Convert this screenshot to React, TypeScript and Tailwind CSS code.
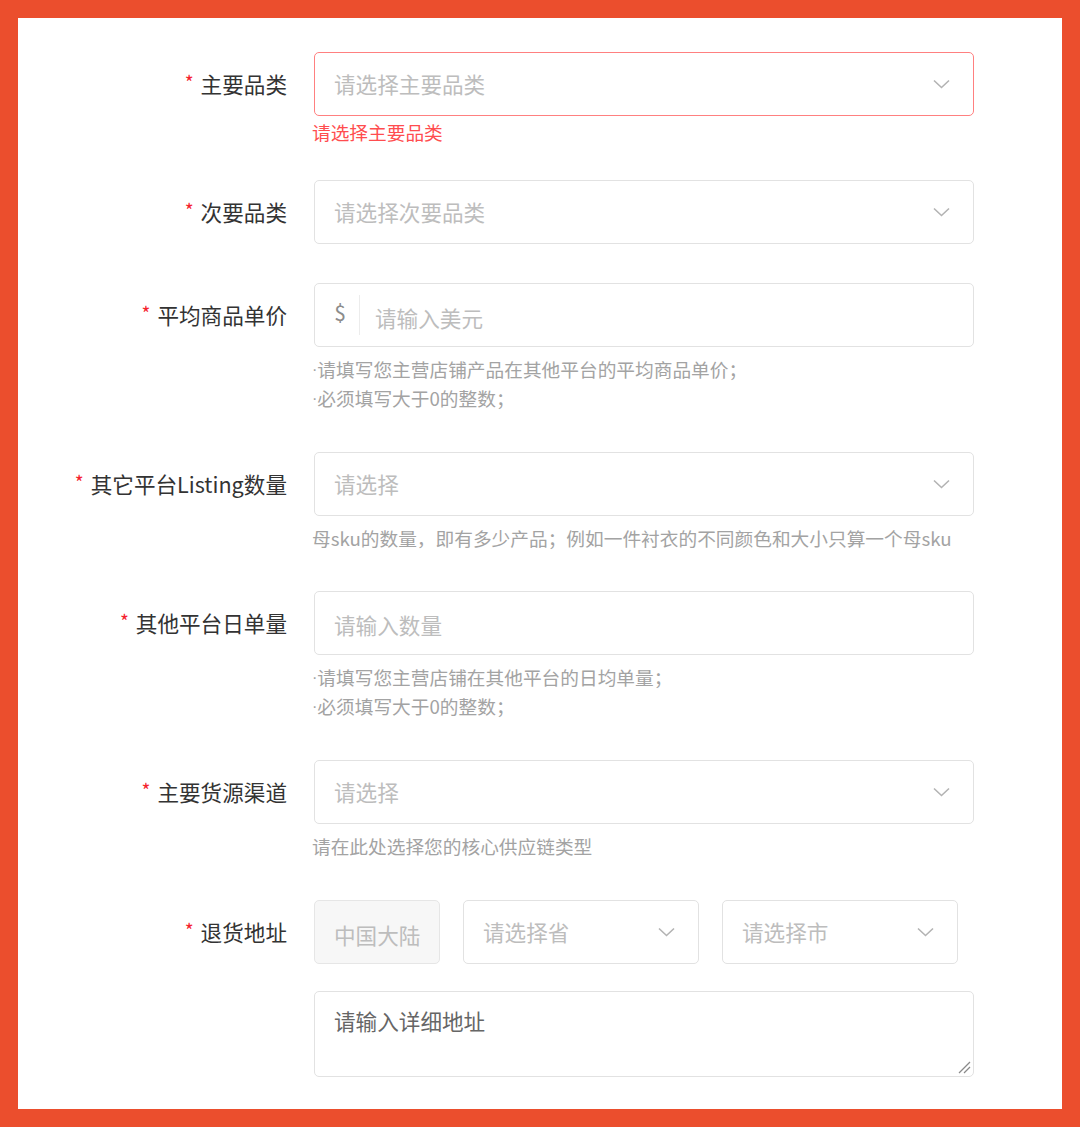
import React from "react";

const Chevron = () => (
  <svg width="17" height="10" viewBox="0 0 17 10" fill="none">
    <polyline points="1,1.5 8.5,8.5 16,1.5" stroke="#b3b3b3" strokeWidth="1.6" />
  </svg>
);

const Label = ({ text }: { text: string }) => (
  <div className="w-[269px] h-[64px] shrink-0 flex items-center justify-end pr-0">
    <span className="text-[#f5222d] text-[19px] leading-none mr-[7px] -mt-[6px]">*</span>
    <span className="text-[#333333] text-[21.6px] leading-none">{text}</span>
  </div>
);

const SelectBox = ({ placeholder, error }: { placeholder: string; error?: boolean }) => (
  <div
    className={`h-[64px] w-[660px] rounded-[5px] border ${
      error ? "border-[#ff8080]" : "border-[#e2e2e2]"
    } bg-white flex items-center justify-between pl-[19px] pr-[23px]`}
  >
    <span className="text-[#bdbdbd] text-[21.6px] leading-none">{placeholder}</span>
    <Chevron />
  </div>
);

const Helper = ({ lines, dot }: { lines: string[]; dot?: boolean }) => (
  <div className="pt-[8px] text-[#a3a3a3] text-[18.7px] leading-[29px] -ml-[2px]">
    {lines.map((l, i) => (
      <div key={i} className="h-[29px] flex items-center">
        {dot && <span className="font-['Liberation_Sans',sans-serif] text-[16px] leading-none">·</span>}
        <span className="leading-none">{l}</span>
      </div>
    ))}
  </div>
);

export default function App() {
  return (
    <div className="w-[1080px] h-[1127px] bg-[#eb4e2d] p-[18px] font-['Noto_Sans_CJK_SC','Noto_Sans',sans-serif]">
      <div className="w-full h-full bg-white pt-[34px] flex flex-col">
        {/* Row 1 */}
        <div className="flex gap-[27px] mb-[36px]">
          <Label text="主要品类" />
          <div>
            <SelectBox placeholder="请选择主要品类" error />
            <div className="pt-[4px] text-[#ff4d4f] text-[18.7px] leading-[24px] -ml-[2px]">请选择主要品类</div>
          </div>
        </div>

        {/* Row 2 */}
        <div className="flex gap-[27px] mb-[39px]">
          <Label text="次要品类" />
          <SelectBox placeholder="请选择次要品类" />
        </div>

        {/* Row 3 */}
        <div className="flex gap-[27px] mb-[39px]">
          <Label text="平均商品单价" />
          <div>
            <div className="h-[64px] w-[660px] rounded-[5px] border border-[#e2e2e2] bg-white flex items-center">
              <span className="w-[44px] text-center text-[#8c8c8c] text-[21px] leading-none -mt-[6px] pl-[6px]">$</span>
              <div className="w-px h-[40px] bg-[#ececec]" />
              <span className="ml-[15px] mt-[6px] text-[#bdbdbd] text-[21.6px] leading-none">请输入美元</span>
            </div>
            <Helper dot lines={["请填写您主营店铺产品在其他平台的平均商品单价；", "必须填写大于0的整数；"]} />
          </div>
        </div>

        {/* Row 4 */}
        <div className="flex gap-[27px] mb-[38px]">
          <Label text="其它平台Listing数量" />
          <div>
            <SelectBox placeholder="请选择" />
            <Helper lines={["母sku的数量，即有多少产品；例如一件衬衣的不同颜色和大小只算一个母sku"]} />
          </div>
        </div>

        {/* Row 5 */}
        <div className="flex gap-[27px] mb-[39px]">
          <Label text="其他平台日单量" />
          <div>
            <div className="h-[64px] w-[660px] rounded-[5px] border border-[#e2e2e2] bg-white flex items-center pl-[19px]">
              <span className="mt-[4px] text-[#bdbdbd] text-[21.6px] leading-none">请输入数量</span>
            </div>
            <Helper dot lines={["请填写您主营店铺在其他平台的日均单量；", "必须填写大于0的整数；"]} />
          </div>
        </div>

        {/* Row 6 */}
        <div className="flex gap-[27px] mb-[39px]">
          <Label text="主要货源渠道" />
          <div>
            <SelectBox placeholder="请选择" />
            <Helper lines={["请在此处选择您的核心供应链类型"]} />
          </div>
        </div>

        {/* Row 7 */}
        <div className="flex gap-[27px]">
          <Label text="退货地址" />
          <div className="w-[660px]">
            <div className="flex gap-[23px]">
              <div className="h-[64px] w-[126px] rounded-[5px] border border-[#e6e6e6] bg-[#f7f7f7] flex items-center pl-[19px]">
                <span className="mt-[6px] text-[#bdbdbd] text-[21.6px] leading-none">中国大陆</span>
              </div>
              <div className="h-[64px] w-[236px] rounded-[5px] border border-[#e2e2e2] bg-white flex items-center justify-between pl-[19px] pr-[23px]">
                <span className="text-[#bdbdbd] text-[21.6px] leading-none">请选择省</span>
                <Chevron />
              </div>
              <div className="h-[64px] w-[236px] rounded-[5px] border border-[#e2e2e2] bg-white flex items-center justify-between pl-[19px] pr-[23px]">
                <span className="text-[#bdbdbd] text-[21.6px] leading-none">请选择市</span>
                <Chevron />
              </div>
            </div>
            <div className="relative mt-[27px] h-[86px] w-[660px] rounded-[5px] border border-[#e2e2e2] bg-white pl-[19px] pt-[18px]">
              <span className="text-[#666666] text-[21.6px] leading-none">请输入详细地址</span>
              <svg className="absolute right-[2px] bottom-[2px]" width="14" height="14" viewBox="0 0 14 14">
                <line x1="13" y1="2" x2="2" y2="13" stroke="#8a8a8a" strokeWidth="1.2" />
                <line x1="13" y1="7" x2="7" y2="13" stroke="#8a8a8a" strokeWidth="1.2" />
              </svg>
            </div>
          </div>
        </div>
      </div>
    </div>
  );
}
